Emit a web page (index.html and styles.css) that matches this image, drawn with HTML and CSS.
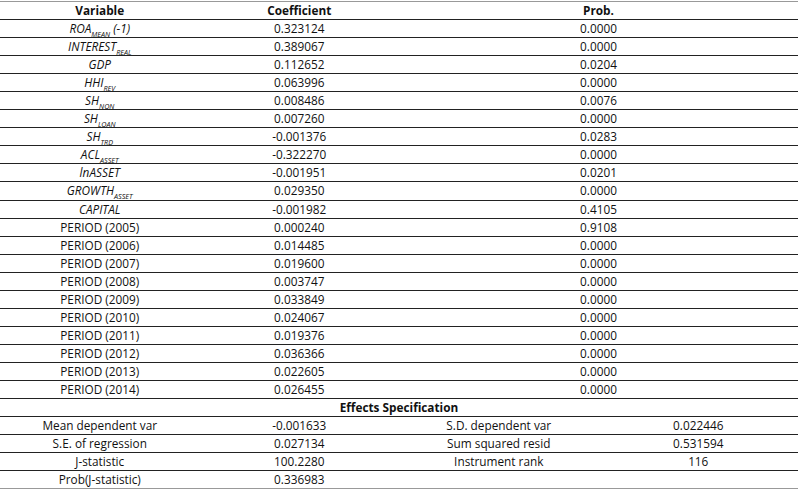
FILE: index.html
```html
<!DOCTYPE html>
<html>
<head>
<meta charset="utf-8">
<link rel="stylesheet" href="styles.css">
</head>
<body>
<div class="tbl">
  <div class="row head"><div class="c2">Variable</div><div class="c2">Coefficient</div><div class="c4">Prob.</div></div>
  <div class="row"><div class="c2 it">ROA<sub>MEAN</sub> (-1)</div><div class="c2">0.323124</div><div class="c4">0.0000</div></div>
  <div class="row"><div class="c2 it">INTEREST<sub>REAL</sub></div><div class="c2">0.389067</div><div class="c4">0.0000</div></div>
  <div class="row"><div class="c2 it">GDP</div><div class="c2">0.112652</div><div class="c4">0.0204</div></div>
  <div class="row"><div class="c2 it">HHI<sub>REV</sub></div><div class="c2">0.063996</div><div class="c4">0.0000</div></div>
  <div class="row"><div class="c2 it">SH<sub>NON</sub></div><div class="c2">0.008486</div><div class="c4">0.0076</div></div>
  <div class="row"><div class="c2 it">SH<sub>LOAN</sub></div><div class="c2">0.007260</div><div class="c4">0.0000</div></div>
  <div class="row"><div class="c2 it">SH<sub>TRD</sub></div><div class="c2">-0.001376</div><div class="c4">0.0283</div></div>
  <div class="row"><div class="c2 it">ACL<sub>ASSET</sub></div><div class="c2">-0.322270</div><div class="c4">0.0000</div></div>
  <div class="row"><div class="c2 it">lnASSET</div><div class="c2">-0.001951</div><div class="c4">0.0201</div></div>
  <div class="row"><div class="c2 it">GROWTH<sub>ASSET</sub></div><div class="c2">0.029350</div><div class="c4">0.0000</div></div>
  <div class="row"><div class="c2 it">CAPITAL</div><div class="c2">-0.001982</div><div class="c4">0.4105</div></div>
  <div class="row"><div class="c2">PERIOD (2005)</div><div class="c2">0.000240</div><div class="c4">0.9108</div></div>
  <div class="row"><div class="c2">PERIOD (2006)</div><div class="c2">0.014485</div><div class="c4">0.0000</div></div>
  <div class="row"><div class="c2">PERIOD (2007)</div><div class="c2">0.019600</div><div class="c4">0.0000</div></div>
  <div class="row"><div class="c2">PERIOD (2008)</div><div class="c2">0.003747</div><div class="c4">0.0000</div></div>
  <div class="row"><div class="c2">PERIOD (2009)</div><div class="c2">0.033849</div><div class="c4">0.0000</div></div>
  <div class="row"><div class="c2">PERIOD (2010)</div><div class="c2">0.024067</div><div class="c4">0.0000</div></div>
  <div class="row"><div class="c2">PERIOD (2011)</div><div class="c2">0.019376</div><div class="c4">0.0000</div></div>
  <div class="row"><div class="c2">PERIOD (2012)</div><div class="c2">0.036366</div><div class="c4">0.0000</div></div>
  <div class="row"><div class="c2">PERIOD (2013)</div><div class="c2">0.022605</div><div class="c4">0.0000</div></div>
  <div class="row"><div class="c2">PERIOD (2014)</div><div class="c2">0.026455</div><div class="c4">0.0000</div></div>
  <div class="row head"><div class="c8">Effects Specification</div></div>
  <div class="row"><div class="c2">Mean dependent var</div><div class="c2">-0.001633</div><div class="c2">S.D. dependent var</div><div class="c2">0.022446</div></div>
  <div class="row"><div class="c2">S.E. of regression</div><div class="c2">0.027134</div><div class="c2">Sum squared resid</div><div class="c2">0.531594</div></div>
  <div class="row"><div class="c2">J-statistic</div><div class="c2">100.2280</div><div class="c2">Instrument rank</div><div class="c2">116</div></div>
  <div class="row"><div class="c2">Prob(J-statistic)</div><div class="c2">0.336983</div><div class="c2"></div><div class="c2"></div></div>
</div>
</body>
</html>
```
FILE: styles.css
```css
html, body {
  margin: 0;
  padding: 0;
  background: #ffffff;
}
body {
  font-family: "Open Sans", "Noto Sans", sans-serif;
  font-size: 11.8px;
  color: #111111;
}
.tbl {
  width: 798px;
  margin-top: 1px;
  border-top: 1px solid #999;
  border-bottom: 1px solid #999;
}
.row {
  display: grid;
  grid-template-columns: repeat(8, 1fr);
  height: 17.06px;
  border-top: 1px solid #222;
  line-height: 17px;
  text-align: center;
  white-space: nowrap;
}
.row:first-child {
  border-top: none;
}
.c2 { grid-column: span 2; }
.c4 { grid-column: span 4; }
.c8 { grid-column: span 8; }
.head { font-weight: 700; }
.it { font-style: italic; }
sub {
  font-size: 7.2px;
  vertical-align: -3.5px;
  line-height: 0;
}
```
